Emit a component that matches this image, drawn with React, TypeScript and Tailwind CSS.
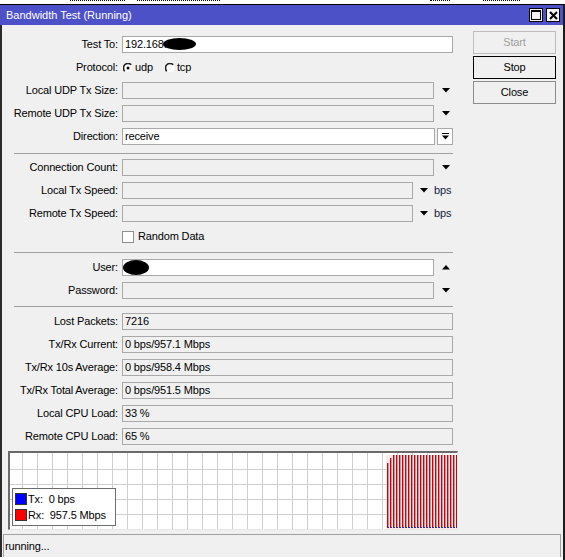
import React from "react";

const FONT = "font-['Liberation_Sans',Arial,sans-serif]";

function Down() {
  return (
    <svg width="8" height="5" viewBox="0 0 8 5" className="block">
      <polygon points="0,0 8,0 4,4.5" fill="#000" />
    </svg>
  );
}

function Up() {
  return (
    <svg width="8" height="5" viewBox="0 0 8 5" className="block">
      <polygon points="0,4.5 8,4.5 4,0" fill="#000" />
    </svg>
  );
}

function Radio({ checked }: { checked?: boolean }) {
  return (
    <svg width="10" height="10" viewBox="0 0 10 10" className="block">
      <circle cx="5" cy="5" r="4.3" fill="#fff" />
      <path d="M8.2 1.8 A4.3 4.3 0 0 0 1.8 8.2" fill="none" stroke="#222" strokeWidth="1.6" />
      {checked && <circle cx="5" cy="5" r="1.5" fill="#000" />}
    </svg>
  );
}

function Label({ children }: { children: React.ReactNode }) {
  return <div className="w-[116px] shrink-0 text-right">{children}</div>;
}

function Row({ label, children }: { label: string; children?: React.ReactNode }) {
  return (
    <div className="flex h-[17px] items-center">
      <Label>{label}</Label>
      <div className="ml-[4px] flex h-full items-center">{children}</div>
    </div>
  );
}

function Field({
  width,
  white,
  children,
}: {
  width: string;
  white?: boolean;
  children?: React.ReactNode;
}) {
  return (
    <div
      className={`relative h-[17px] overflow-hidden whitespace-pre border border-[#a9a9a9] pl-[2px] leading-[15px] ${
        white ? "bg-white" : "bg-[#f0f0f0]"
      } ${width}`}
    >
      {children}
    </div>
  );
}

function Separator({ top, bottom }: { top: string; bottom: string }) {
  return <div className={`ml-[12px] h-px w-[439px] bg-[#a0a0a0] ${top} ${bottom}`} />;
}

function Graph() {
  const vLines: number[] = [];
  for (let k = 0; k <= 28; k++) vLines.push(12 + 15 * k);
  const hLines = [16, 31, 46, 61];
  const bars: { x: number; top: number }[] = [];
  for (let i = 0; i < 24; i++) {
    bars.push({ x: 377 + 3 * i, top: i === 0 ? 10 : i === 1 ? 5 : 2 });
  }
  return (
    <svg width="447" height="76" viewBox="0 0 447 76" className="block">
      <rect x="0" y="0" width="447" height="76" fill="#fff" />
      {vLines.map((x) => (
        <line key={`v${x}`} x1={x + 0.5} y1="0" x2={x + 0.5} y2="76" stroke="#cfcfcf" strokeWidth="1" />
      ))}
      {hLines.map((y) => (
        <line key={`h${y}`} x1="0" y1={y + 0.5} x2="447" y2={y + 0.5} stroke="#cfcfcf" strokeWidth="1" />
      ))}
      <rect x="376" y="2" width="71" height="74" fill="#ffdede" opacity="0.7" />
      {bars.map((b) => (
        <g key={b.x}>
          <rect x={b.x} y={b.top} width="1" height={74 - b.top} fill="#a80f18" />
          <rect x={b.x + 1} y={b.top} width="1" height={74 - b.top} fill="#e58a8e" />
          <rect x={b.x} y="74" width="2" height="1" fill="#2a2a90" />
        </g>
      ))}
    </svg>
  );
}

export default function App() {
  return (
    <div className={`h-[560px] w-[565px] overflow-hidden bg-white text-[11px] tracking-[-0.15px] text-black ${FONT}`}>
      {/* strip of the window behind */}
      <div className="flex h-[4px] items-start bg-white">
        <div className="ml-[70px] w-[55px] border-t border-dotted border-black" />
        <div className="ml-[12px] w-[83px] border-t border-dotted border-black" />
        <div className="ml-[210px] w-[20px] border-t border-dotted border-black" />
        <div className="ml-[33px] w-[37px] border-t border-dotted border-black" />
      </div>

      <div className="h-[556px] border-r-2 border-t border-[#1c1c1c] border-t-black">
        {/* title bar */}
        <div className="flex h-[20px] items-center bg-[#4d51c8]">
          <span className="ml-[6px] text-[11px] tracking-normal text-white">Bandwidth Test (Running)</span>
          <div className="ml-auto mr-[3px] flex gap-[3px]">
            <div className="flex h-[14px] w-[14px] items-center justify-center border border-black bg-[#f4f4f4]">
              <svg width="10" height="10" viewBox="0 0 10 10" className="block">
                <rect x="0.5" y="0.5" width="9" height="9" fill="none" stroke="#000" strokeWidth="1" />
                <rect x="0" y="0" width="10" height="2" fill="#000" />
              </svg>
            </div>
            <div className="flex h-[14px] w-[14px] items-center justify-center border border-black bg-[#f4f4f4]">
              <svg width="9" height="9" viewBox="0 0 9 9" className="block">
                <path d="M1 1 L8 8 M8 1 L1 8" stroke="#000" strokeWidth="2" />
              </svg>
            </div>
          </div>
        </div>

        {/* window body */}
        <div className="flex h-[532px] flex-col border-l-2 border-[#2a2a2a] bg-[#f0f0f0]">
          <div className="flex items-start">
            <div className="flex w-[451px] flex-col pt-[11px]">
              <div className="flex flex-col gap-[6px]">
                <Row label="Test To:">
                  <Field width="w-[331px]" white>
                    192.168.
                    <div className="absolute left-[40px] top-[1px] h-[12px] w-[33px] rounded-[50%] bg-black" />
                  </Field>
                </Row>
                <Row label="Protocol:">
                  <div className="ml-[1px] flex items-center">
                    <Radio checked />
                    <span className="ml-[2px]">udp</span>
                    <div className="ml-[12px]">
                      <Radio />
                    </div>
                    <span className="ml-[2px]">tcp</span>
                  </div>
                </Row>
                <Row label="Local UDP Tx Size:">
                  <Field width="w-[312px]" />
                  <div className="ml-[8px]">
                    <Down />
                  </div>
                </Row>
                <Row label="Remote UDP Tx Size:">
                  <Field width="w-[312px]" />
                  <div className="ml-[8px]">
                    <Down />
                  </div>
                </Row>
                <Row label="Direction:">
                  <Field width="w-[313px]" white>
                    receive
                  </Field>
                  <div className="ml-[2px] flex h-[17px] w-[16px] items-center justify-center border border-[#a9a9a9] bg-white">
                    <svg width="7" height="7" viewBox="0 0 7 7" className="block">
                      <rect x="0" y="0" width="7" height="1" fill="#000" />
                      <polygon points="0,2.5 7,2.5 3.5,6.5" fill="#000" />
                    </svg>
                  </div>
                </Row>
              </div>

              <Separator top="mt-[8px]" bottom="mb-[5px]" />

              <div className="flex flex-col gap-[6px]">
                <Row label="Connection Count:">
                  <Field width="w-[312px]" />
                  <div className="ml-[8px]">
                    <Down />
                  </div>
                </Row>
                <Row label="Local Tx Speed:">
                  <Field width="w-[291px]" />
                  <div className="ml-[7px]">
                    <Down />
                  </div>
                  <span className="ml-[6px] text-[#15203a]">bps</span>
                </Row>
                <Row label="Remote Tx Speed:">
                  <Field width="w-[291px]" />
                  <div className="ml-[7px]">
                    <Down />
                  </div>
                  <span className="ml-[6px] text-[#15203a]">bps</span>
                </Row>
                <Row label="">
                  <div className="h-[12px] w-[12px] border border-[#8f8f8f] bg-white" />
                  <span className="ml-[4px]">Random Data</span>
                </Row>
              </div>

              <Separator top="mt-[7px]" bottom="mb-[6px]" />

              <div className="flex flex-col gap-[6px]">
                <Row label="User:">
                  <Field width="w-[312px]" white>
                    <div className="absolute left-0 top-0 h-[15px] w-[26px] rounded-[50%] bg-black" />
                  </Field>
                  <div className="ml-[8px]">
                    <Up />
                  </div>
                </Row>
                <Row label="Password:">
                  <Field width="w-[312px]" />
                  <div className="ml-[8px]">
                    <Down />
                  </div>
                </Row>
              </div>

              <Separator top="mt-[7px]" bottom="mb-[6px]" />

              <div className="flex flex-col gap-[6px]">
                <Row label="Lost Packets:">
                  <Field width="w-[331px]">7216</Field>
                </Row>
                <Row label="Tx/Rx Current:">
                  <Field width="w-[331px]">0 bps/957.1 Mbps</Field>
                </Row>
                <Row label="Tx/Rx 10s Average:">
                  <Field width="w-[331px]">0 bps/958.4 Mbps</Field>
                </Row>
                <Row label="Tx/Rx Total Average:">
                  <Field width="w-[331px]">0 bps/951.5 Mbps</Field>
                </Row>
                <Row label="Local CPU Load:">
                  <Field width="w-[331px]">33 %</Field>
                </Row>
                <Row label="Remote CPU Load:">
                  <Field width="w-[331px]">65 %</Field>
                </Row>
              </div>
            </div>

            {/* action buttons */}
            <div className="ml-[20px] flex flex-col gap-[2px] pt-[6px]">
              <div className="flex h-[23px] w-[83px] items-center justify-center border border-[#bcbcbc] bg-[#f0f0f0] text-[#a0a0a0]">
                Start
              </div>
              <div className="flex h-[23px] w-[83px] items-center justify-center border border-black bg-[#f0f0f0]">
                Stop
              </div>
              <div className="flex h-[23px] w-[83px] items-center justify-center border border-[#8c8c8c] bg-[#f0f0f0]">
                Close
              </div>
            </div>
          </div>

          {/* traffic graph */}
          <div className="relative ml-[6px] mt-[6px] h-[79px] w-[450px] border-b border-l-2 border-r border-t-2 border-b-[#e6e6e6] border-l-[#6a6a6a] border-r-[#e6e6e6] border-t-[#6a6a6a]">
            <Graph />
            <div className="absolute left-[2px] top-[35px] flex h-[38px] w-[104px] flex-col justify-center gap-[4px] border border-[#6d6d6d] bg-white pl-[2px]">
              <div className="flex h-[12px] items-center">
                <div className="h-[12px] w-[12px] border border-[#333] bg-[#0000ff]" />
                <span className="ml-[1px] whitespace-pre">Tx:  0 bps</span>
              </div>
              <div className="flex h-[12px] items-center">
                <div className="h-[12px] w-[12px] border border-[#333] bg-[#ff0000]" />
                <span className="ml-[1px] whitespace-pre">Rx:  957.5 Mbps</span>
              </div>
            </div>
          </div>

          {/* status line */}
          <div className="ml-[1px] mr-[2px] mt-[4px] flex h-[23px] items-center border-l border-r border-t border-[#a0a0a0] pl-[1px]">
            running...
          </div>
        </div>
      </div>
    </div>
  );
}
